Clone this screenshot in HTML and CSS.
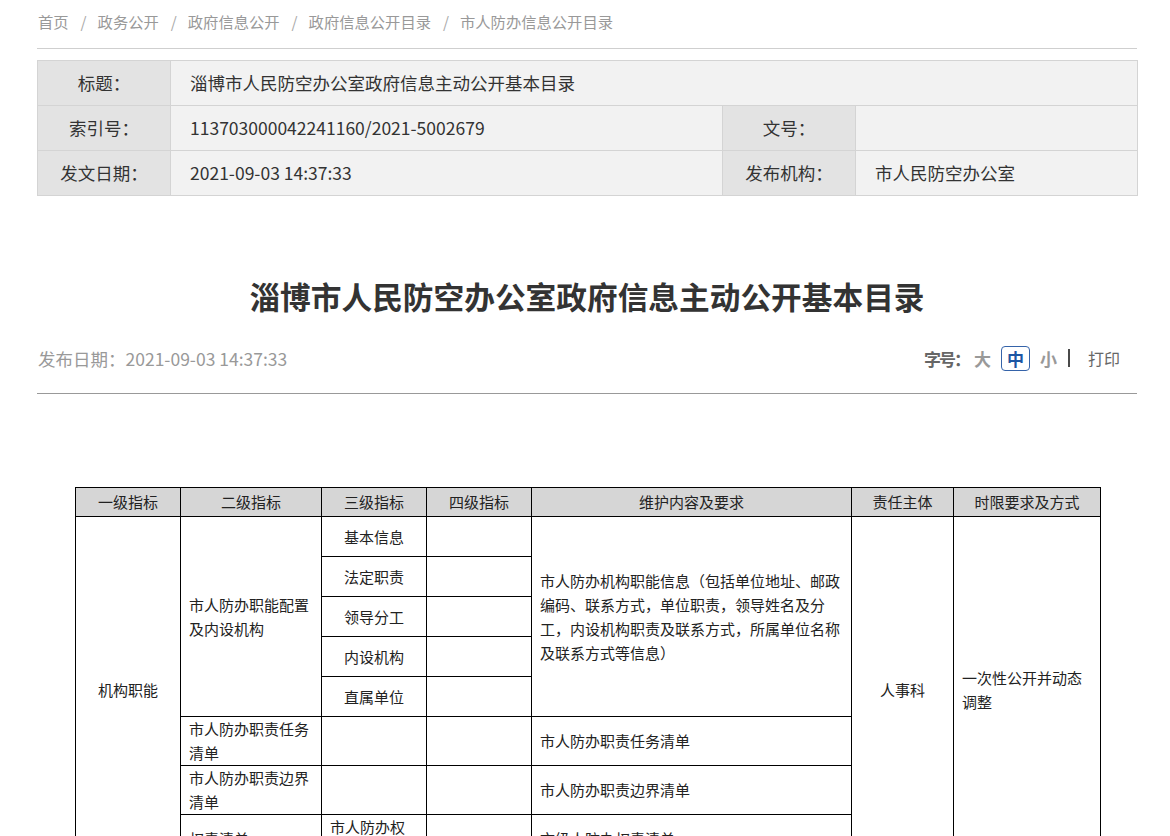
FILE: index.html
```html
<!DOCTYPE html>
<html lang="zh-CN">
<head>
<meta charset="utf-8">
<title>淄博市人民防空办公室政府信息主动公开基本目录</title>
<link rel="stylesheet" href="styles.css">
</head>
<body>
<div class="page">
  <div class="crumbs">
    <a>首页</a><span class="sep">/</span><a>政务公开</a><span class="sep">/</span><a>政府信息公开</a><span class="sep">/</span><a>政府信息公开目录</a><span class="sep">/</span><a>市人防办信息公开目录</a>
  </div>

  <table class="info">
    <colgroup><col class="c-l"><col class="c-v1"><col class="c-l"><col class="c-v2"></colgroup>
    <tr><th>标题：</th><td colspan="3">淄博市人民防空办公室政府信息主动公开基本目录</td></tr>
    <tr><th>索引号：</th><td>113703000042241160/2021-5002679</td><th>文号：</th><td></td></tr>
    <tr><th>发文日期：</th><td>2021-09-03 14:37:33</td><th>发布机构：</th><td>市人民防空办公室</td></tr>
  </table>

  <h1 class="title">淄博市人民防空办公室政府信息主动公开基本目录</h1>

  <div class="meta">
    <span class="date">发布日期：2021-09-03 14:37:33</span>
    <span class="tools">
      <b class="fs-label">字号：</b><b class="fs">大</b><b class="fs fs-on">中</b><b class="fs">小</b><span class="bar"></span><span class="print">打印</span>
    </span>
  </div>

  <table class="grid">
    <colgroup>
      <col class="g1"><col class="g2"><col class="g3"><col class="g4"><col class="g5"><col class="g6"><col class="g7">
    </colgroup>
    <tr class="head"><th>一级指标</th><th>二级指标</th><th>三级指标</th><th>四级指标</th><th>维护内容及要求</th><th>责任主体</th><th>时限要求及方式</th></tr>
    <tr class="r40">
      <td rowspan="8" class="ctr">机构职能</td>
      <td rowspan="5" class="lft">市人防办职能配置及内设机构</td>
      <td class="ctr">基本信息</td><td></td>
      <td rowspan="5" class="lft">市人防办机构职能信息（包括单位地址、邮政编码、联系方式，单位职责，领导姓名及分工，内设机构职责及联系方式，所属单位名称及联系方式等信息）</td>
      <td rowspan="8" class="ctr">人事科</td>
      <td rowspan="8" class="lft">一次性公开并动态调整</td>
    </tr>
    <tr class="r40"><td class="ctr">法定职责</td><td></td></tr>
    <tr class="r40"><td class="ctr">领导分工</td><td></td></tr>
    <tr class="r40"><td class="ctr">内设机构</td><td></td></tr>
    <tr class="r40"><td class="ctr">直属单位</td><td></td></tr>
    <tr class="r49"><td class="lft">市人防办职责任务清单</td><td></td><td></td><td class="lft">市人防办职责任务清单</td></tr>
    <tr class="r49"><td class="lft">市人防办职责边界清单</td><td></td><td></td><td class="lft">市人防办职责边界清单</td></tr>
    <tr class="r49"><td class="lft">权责清单</td><td class="lft">市人防办权责清单</td><td></td><td class="lft">市级人防办权责清单</td></tr>
  </table>
</div>
</body>
</html>
```

FILE: styles.css
```css
html, body {
  margin: 0;
  padding: 0;
  background: #fff;
}
body {
  font-family: "Noto Sans CJK SC", "Noto Sans", sans-serif;
  color: #333;
}
.page {
  width: 1100px;
  margin-left: 37px;
  padding-bottom: 40px;
}
.crumbs {
  padding: 9px 0 15px 1px;
  line-height: 24px;
  font-size: 15.3px;
  color: #999;
  border-bottom: 1px solid #cfcfcf;
}
.crumbs .sep {
  display: inline-block;
  margin: 0 11px 0 12px;
  color: #aaa;
}
.info {
  margin-top: 11px;
  width: 1100px;
  border-collapse: collapse;
  table-layout: fixed;
  font-size: 17.5px;
  color: #333;
}
.info .c-l { width: 133px; }
.info .c-v1 { width: 552px; }
.info .c-v2 { width: 282px; }
.info th, .info td {
  border: 1px solid #d4d4d4;
  height: 44px;
  padding: 0;
  line-height: 24px;
}
.info th {
  background: #e3e3e3;
  font-weight: normal;
  text-align: center;
}
.info td {
  background: #f2f2f2;
  padding-left: 19px;
}
.title {
  margin: 80px 0 0;
  text-align: center;
  font-size: 30.7px;
  line-height: 40px;
  font-weight: bold;
  color: #333;
}
.meta {
  margin-top: 27px;
  display: flex;
  justify-content: space-between;
  align-items: center;
  height: 30px;
  padding: 0 17px 20px 1px;
  border-bottom: 1px solid #999;
}
.date {
  font-size: 17.5px;
  color: #999;
}
.tools {
  display: flex;
  align-items: center;
  font-size: 17px;
}
.fs-label {
  color: #666;
  margin-right: 0;
  letter-spacing: -2px;
}
.fs {
  color: #999;
  margin: 0 5px;
}
.fs-on {
  color: #1d56a3;
  border: 1px solid #3563a9;
  border-radius: 4px;
  padding: 0 5px;
  line-height: 23px;
}
.bar {
  display: inline-block;
  width: 2px;
  height: 18px;
  background: #4a4a4a;
  margin: 0 18px 0 6px;
}
.print {
  font-size: 16px;
  color: #666;
}
.grid {
  margin: 93px 0 0 38px;
  width: 1025px;
  border-collapse: collapse;
  table-layout: fixed;
  font-size: 15px;
  color: #222;
}
.g1 { width: 105px; }
.g2 { width: 141px; }
.g3 { width: 105px; }
.g4 { width: 105px; }
.g5 { width: 320px; }
.g6 { width: 102px; }
.g7 { width: 147px; }
.grid th, .grid td {
  border: 1px solid #000;
  padding: 0 8px;
  line-height: 24px;
}
.grid .head th {
  background: #d6d6d6;
  font-weight: normal;
  text-align: center;
  height: 28px;
  padding: 0;
}
.grid .r40 { height: 40px; }
.grid .r49 { height: 49px; }
.grid .ctr { text-align: center; }
.grid .lft { text-align: left; }
```
